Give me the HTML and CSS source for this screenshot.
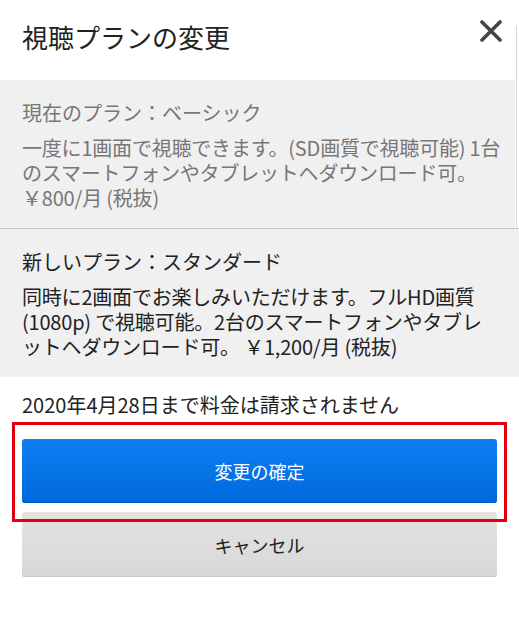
FILE: index.html
```html
<!DOCTYPE html>
<html lang="ja">
  <head>
    <meta charset="UTF-8" />
    <title>視聴プランの変更</title>
    <link rel="stylesheet" href="styles.css">
  </head>
  <body>
    <div class="sheet">
      <header class="sheet-head">
        <h1 class="sheet-title">視聴プランの変更</h1>
        <button class="close" aria-label="閉じる">
          <svg width="22" height="22" viewBox="0 0 22 22">
            <path d="M2 2 L20 20 M20 2 L2 20" stroke="#444" stroke-width="3.6" stroke-linecap="round" fill="none" />
          </svg>
        </button>
      </header>
      <section class="plan plan-current">
        <p class="plan-name">現在のプラン：ベーシック</p>
        <p class="plan-desc">一度に1画面で視聴できます。(SD画質で視聴可能) 1台<br />のスマートフォンやタブレットヘダウンロード可。<br />￥800/月 (税抜)</p>
      </section>
    </div>
    <section class="plan plan-new">
      <p class="plan-name">新しいプラン：スタンダード</p>
      <p class="plan-desc">同時に2画面でお楽しみいただけます。フルHD画質<br />(1080p) で視聴可能。2台のスマートフォンやタブレ<br />ットヘダウンロード可。 ￥1,200/月 (税抜)</p>
    </section>
    <p class="notice">2020年4月28日まで料金は請求されません</p>
    <div class="actions">
      <div class="highlight"></div>
      <button class="btn btn-primary">変更の確定</button>
      <button class="btn btn-cancel">キャンセル</button>
    </div>
  </body>
</html>
```

FILE: styles.css
```css
* { box-sizing: border-box; }

body {
	margin: 0;
	background: #fff;
	color: #222;
	font-family: "Noto Sans CJK JP", "Noto Sans", sans-serif;
}

p { margin: 0; }

/* upper sheet with its faint right edge */
.sheet {
	position: relative;
	margin-right: 4px;
}
.sheet::after {
	content: "";
	position: absolute;
	top: 26px;
	bottom: 0;
	right: -2px;
	width: 1px;
	background: #d6d6d6;
	border-radius: 1px;
}

.sheet-head {
	display: flex;
	justify-content: space-between;
	align-items: flex-start;
	height: 80px;
	padding: 19px 13px 0 22px;
}
.sheet-title {
	margin: 0;
	font-size: 26px;
	line-height: 36px;
	font-weight: normal;
	color: #222;
}
.close {
	border: none;
	background: none;
	padding: 0;
	margin-top: 1px;
	width: 22px;
	height: 22px;
	cursor: pointer;
}

.plan {
	background: #f0f0f0;
	padding: 20px 22px 18px;
	font-size: 20px;
	line-height: 25px;
}
.plan-name { margin-bottom: 10px; }
.plan-desc {
	white-space: nowrap;
	letter-spacing: -0.2px;
}
.plan-current { color: #777; }
.plan-new {
	color: #222;
	border-top: 1px solid #c9c9c9;
}

.notice {
	margin: 15px 22px 0;
	font-size: 20px;
	line-height: 25px;
	color: #222;
}

.actions {
	position: relative;
	display: flex;
	flex-direction: column;
	gap: 9px;
	padding: 22px 22px 0;
}
.highlight {
	position: absolute;
	left: 12px;
	top: 5px;
	width: 495px;
	height: 100px;
	border: 3px solid #e3000e;
	pointer-events: none;
}

.btn {
	display: block;
	width: 100%;
	border: none;
	border-radius: 3px;
	font-family: inherit;
	font-size: 18px;
	cursor: pointer;
}
.btn-primary {
	height: 64px;
	color: #fff;
	background: linear-gradient(#0e7ff3, #0069dc);
	box-shadow: inset 0 -1px 0 #005cc2;
}
.btn-cancel {
	height: 65px;
	color: #222;
	background: linear-gradient(#e3e3e3, #d8d8d8);
	box-shadow: inset 0 -1px 0 #c8c8c8;
}
```
